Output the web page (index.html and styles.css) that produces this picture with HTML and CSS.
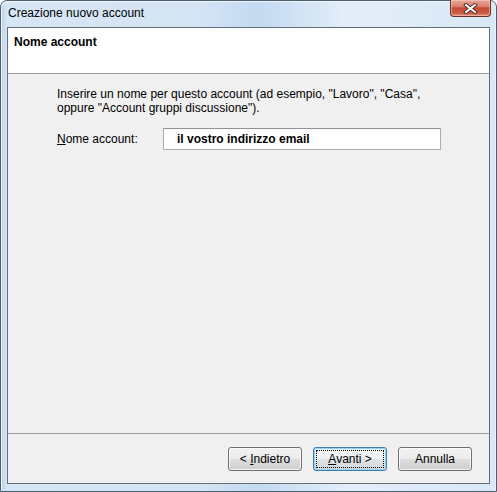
FILE: index.html
```html
<!DOCTYPE html>
<html lang="it">
<head>
    <meta charset="UTF-8">
    <title>Creazione nuovo account</title>
    <link rel="stylesheet" href="styles.css">
</head>
<body>
    <div class="window">
        <!-- barra del titolo -->
        <div class="titlebar">
            <span class="title">Creazione nuovo account</span>
            <div class="close-btn">
                <svg width="15" height="11" viewBox="0 0 15 11">
                    <path d="M3 2 L12 9 M12 2 L3 9" stroke="#4a2a24" stroke-width="4" stroke-linecap="square" fill="none"/>
                    <path d="M3 2 L12 9 M12 2 L3 9" stroke="#ffffff" stroke-width="2" stroke-linecap="square" fill="none"/>
                </svg>
            </div>
        </div>

        <div class="client">
            <div class="header">
                <h1>Nome account</h1>
            </div>

            <div class="content">
                <p class="intro">Inserire un nome per questo account (ad esempio, "Lavoro", "Casa",<br>oppure "Account gruppi discussione").</p>
                <div class="field">
                    <label for="account-name"><u>N</u>ome account:</label>
                    <input type="text" id="account-name" value="il vostro indirizzo email">
                </div>
            </div>

            <div class="footer">
                <button type="button" class="btn">&lt; <u>I</u>ndietro</button>
                <button type="button" class="btn default"><span class="focus"><u>A</u>vanti &gt;</span></button>
                <button type="button" class="btn">Annulla</button>
            </div>
        </div>
    </div>
</body>
</html>
```

FILE: styles.css
```css
/* pagina */
body {
    margin: 0;
    font-family: "Liberation Sans", Arial, sans-serif;
    font-size: 12px;
    color: #000;
    background: #fff;
}

/* cornice della finestra */
.window {
    width: 497px;
    height: 492px;
    box-sizing: border-box;
    border: 1px solid #4b5d70;
    border-radius: 7px 7px 0 0;
    padding: 0 6px 7px 6px;
    display: flex;
    flex-direction: column;
    background: linear-gradient(to right, #b9d1ea 0px, #d7e6f5 6px, #d4e4f4 40%, #c3daf1 52%, #e3eef9 70%, #d9e7f6 100%);
    box-shadow: inset 1px 1px 0 #f2f7fc, inset -1px 0 0 #eaf2fa;
}

.titlebar {
    height: 26px;
    position: relative;
    display: flex;
    align-items: center;
}

.title {
    padding-left: 1px;
    padding-bottom: 2px;
    color: #000;
}

.close-btn {
    position: absolute;
    top: -1px;
    right: -1px;
    width: 41px;
    height: 17px;
    box-sizing: border-box;
    border: 1px solid #6b3127;
    border-top: none;
    border-radius: 0 0 4px 4px;
    background: linear-gradient(to bottom, #e6a99b 0%, #d9806c 40%, #c44a33 50%, #c95a42 80%, #e09078 100%);
    box-shadow: inset 0 0 0 1px rgba(255, 210, 200, 0.5);
    display: flex;
    align-items: center;
    justify-content: center;
}

/* area client */
.client {
    flex: 1;
    display: flex;
    flex-direction: column;
    border: 1px solid #636e79;
    background: #f0f0f0;
}

.header {
    height: 46px;
    background: #fff;
    border-bottom: 1px solid #a0a0a0;
    box-sizing: border-box;
    padding: 7px 6px 0;
}

.header h1 {
    margin: 0;
    font-size: 12px;
    line-height: 14px;
    font-weight: bold;
}

.content {
    flex: 1;
    padding: 13px 0 0 49px;
}

.intro {
    margin: 0;
    line-height: 14px;
}

.field {
    display: flex;
    align-items: center;
    margin-top: 13px;
}

.field label {
    width: 106px;
}

.field input {
    width: 278px;
    height: 22px;
    box-sizing: border-box;
    border: 1px solid #abadb3;
    border-top-color: #8e9197;
    padding: 0 4px 0 13px;
    font-family: "Liberation Sans", Arial, sans-serif;
    font-size: 12px;
    font-weight: bold;
    color: #000;
    background: #fff;
    outline: none;
}

/* pulsanti */
.footer {
    height: 50px;
    box-sizing: border-box;
    border-top: 1px solid #a0a0a0;
    padding: 13px 17px 0 0;
    display: flex;
    justify-content: flex-end;
    align-items: flex-start;
    gap: 11px;
}

.btn {
    width: 74px;
    height: 24px;
    box-sizing: border-box;
    border: 1px solid #707070;
    border-radius: 3px;
    padding: 0;
    font-family: "Liberation Sans", Arial, sans-serif;
    font-size: 12px;
    color: #000;
    background: linear-gradient(to bottom, #f2f2f2 0%, #ebebeb 48%, #dddddd 52%, #cfcfcf 100%);
    box-shadow: inset 0 0 0 1px rgba(255, 255, 255, 0.7);
}

.btn.default {
    border-color: #3c7fb1;
    background: linear-gradient(to bottom, #f4f6f8 0%, #eceff1 48%, #e0e3e5 52%, #d4d8db 100%);
    box-shadow: inset 0 0 0 1px #8fd3f5;
    padding: 2px;
}

.btn.default .focus {
    display: flex;
    align-items: center;
    justify-content: center;
    height: 100%;
    box-sizing: border-box;
    border: 1px dotted #000;
}
```
